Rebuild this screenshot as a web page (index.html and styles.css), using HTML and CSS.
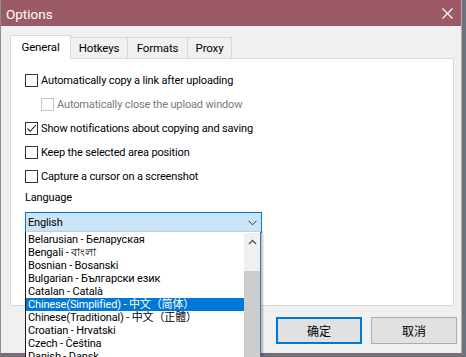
FILE: index.html
```html
<!DOCTYPE html>
<html>
<head>
<meta charset="utf-8">
<link rel="stylesheet" href="styles.css">
</head>
<body>
<div class="window">
  <div class="titlebar">
    <span class="title">Options</span>
    <span class="close"><svg width="11" height="11" viewBox="0 0 11 11"><path d="M0.5 0.5L10.5 10.5M10.5 0.5L0.5 10.5" stroke="#fff" stroke-width="1.1" fill="none"/></svg></span>
  </div>
  <div class="content">
    <div class="tabs">
      <div class="tab active w-general">General</div>
      <div class="tab w-hotkeys">Hotkeys</div>
      <div class="tab w-formats">Formats</div>
      <div class="tab w-proxy">Proxy</div>
    </div>
    <div class="panel">
      <div class="row"><span class="cb"></span><span>Automatically copy a link after uploading</span></div>
      <div class="row sub disabled"><span class="cb"></span><span>Automatically close the upload window</span></div>
      <div class="row"><span class="cb"><svg width="11" height="11" viewBox="0 0 11 11"><path d="M1.5 5.5L4.2 8.3L9.8 2.2" stroke="#222" stroke-width="1.1" fill="none"/></svg></span><span>Show notifications about copying and saving</span></div>
      <div class="row"><span class="cb"></span><span>Keep the selected area position</span></div>
      <div class="row"><span class="cb"></span><span>Capture a cursor on a screenshot</span></div>
      <div class="lang-label">Language</div>
      <div class="select">
        <span>English</span>
        <svg width="9" height="6" viewBox="0 0 9 6"><path d="M0.5 0.8L4.5 4.8L8.5 0.8" stroke="#333" stroke-width="1" fill="none"/></svg>
      </div>
    </div>
    <div class="buttons">
      <button class="btn default">确定</button>
      <button class="btn">取消</button>
    </div>
  </div>
  <div class="droplist">
    <div class="items">
      <div class="item">Belarusian - Беларуская</div>
      <div class="item">Bengali - বাংলা</div>
      <div class="item">Bosnian - Bosanski</div>
      <div class="item">Bulgarian - Български език</div>
      <div class="item">Catalan - Català</div>
      <div class="item selected">Chinese(Simplified) - 中文（简体）</div>
      <div class="item">Chinese(Traditional) - 中文（正體）</div>
      <div class="item">Croatian - Hrvatski</div>
      <div class="item">Czech - Čeština</div>
      <div class="item">Danish - Dansk</div>
    </div>
    <div class="scrollbar">
      <div class="arrow"><svg width="9" height="6" viewBox="0 0 9 6"><path d="M1 5L4.5 1.5L8 5" stroke="#555" stroke-width="1.4" fill="none"/></svg></div>
      <div class="thumb"></div>
    </div>
  </div>
</div>
</body>
</html>
```

FILE: styles.css
```css
html, body {
  margin: 0;
  padding: 0;
}
body {
  width: 466px;
  height: 357px;
  overflow: hidden;
  background: #6b737d;
  font-family: Roboto, "Noto Sans CJK SC", sans-serif;
  font-size: 11px;
  letter-spacing: -0.15px;
  color: #000;
}
.window {
  position: relative;
  width: 462px;
  height: 354px;
  box-sizing: border-box;
  background: #f0f0f0;
  border-left: 1px solid #8a8f96;
  border-right: 1px solid #c9a3ab;
  border-bottom: 1px solid #9c5a67;
}
.titlebar {
  height: 26px;
  background: #9c5a67;
  display: flex;
  align-items: center;
  justify-content: space-between;
  color: #fff;
}
.title {
  font-size: 13.5px;
  letter-spacing: 0;
  padding-left: 5px;
  padding-top: 1px;
}
.close {
  display: flex;
  margin-right: 8px;
}
.content {
  padding: 9px 0 0 9px;
}
.tabs {
  display: flex;
  align-items: flex-end;
  height: 23px;
}
.tab {
  box-sizing: border-box;
  height: 21px;
  border: 1px solid #d9d9d9;
  border-bottom: none;
  background: #f0f0f0;
  margin-left: -1px;
  text-align: center;
  line-height: 20px;
  font-size: 11.5px;
}
.tab.active {
  height: 24px;
  margin-left: 0;
  margin-bottom: -1px;
  background: #fff;
  position: relative;
  z-index: 1;
  line-height: 22px;
}
.w-general { width: 61px; }
.w-hotkeys { width: 58px; }
.w-formats { width: 61px; }
.w-proxy { width: 45px; }
.panel {
  box-sizing: border-box;
  width: 444px;
  height: 248px;
  background: #fff;
  border: 1px solid #d9d9d9;
  padding: 9px 14px 0 14px;
}
.row {
  display: flex;
  align-items: center;
  height: 24px;
}
.row.sub {
  padding-left: 16px;
}
.cb {
  box-sizing: border-box;
  width: 13px;
  height: 13px;
  border: 1px solid #333;
  background: #fff;
  margin-right: 3px;
  display: flex;
  align-items: center;
  justify-content: center;
  flex: none;
}
.disabled {
  color: #7a7a7a;
}
.disabled .cb {
  border-color: #c4c4c4;
}
.lang-label {
  height: 20px;
  line-height: 20px;
}
.select {
  box-sizing: border-box;
  margin-top: 4px;
  width: 237px;
  height: 21px;
  background: #cce4f7;
  border: 1px solid #0078d7;
  display: flex;
  align-items: center;
  justify-content: space-between;
  padding: 0 4px 0 2px;
}
.buttons {
  display: flex;
  justify-content: flex-end;
  gap: 9px;
  margin-top: 11px;
  padding-right: 4px;
}
.btn {
  box-sizing: border-box;
  width: 86px;
  height: 27px;
  background: #e1e1e1;
  border: 1px solid #adadad;
  font-family: "Noto Sans CJK SC", sans-serif;
  font-size: 12px;
  color: #000;
  padding: 0;
}
.btn.default {
  border: 2px solid #0078d7;
}
.droplist {
  position: absolute;
  left: 24px;
  top: 232px;
  width: 236px;
  height: 140px;
  box-sizing: border-box;
  background: #fff;
  border-left: 1px solid #1a1a1a;
  border-right: 1px solid #3b76ad;
  box-shadow: 2px 0 2px rgba(0, 0, 0, 0.25);
  display: flex;
  padding-top: 1px;
}
.items {
  flex: 1;
}
.item {
  height: 13px;
  line-height: 13px;
  padding-left: 2px;
  white-space: nowrap;
  overflow: hidden;
}
.item.selected {
  background: #0078d7;
  color: #fff;
}
.scrollbar {
  width: 16px;
  background: #f0f0f0;
  display: flex;
  flex-direction: column;
}
.arrow {
  height: 17px;
  display: flex;
  justify-content: center;
  align-items: center;
}
.thumb {
  margin-top: 21px;
  flex: 1;
  background: #cdcdcd;
}
```
